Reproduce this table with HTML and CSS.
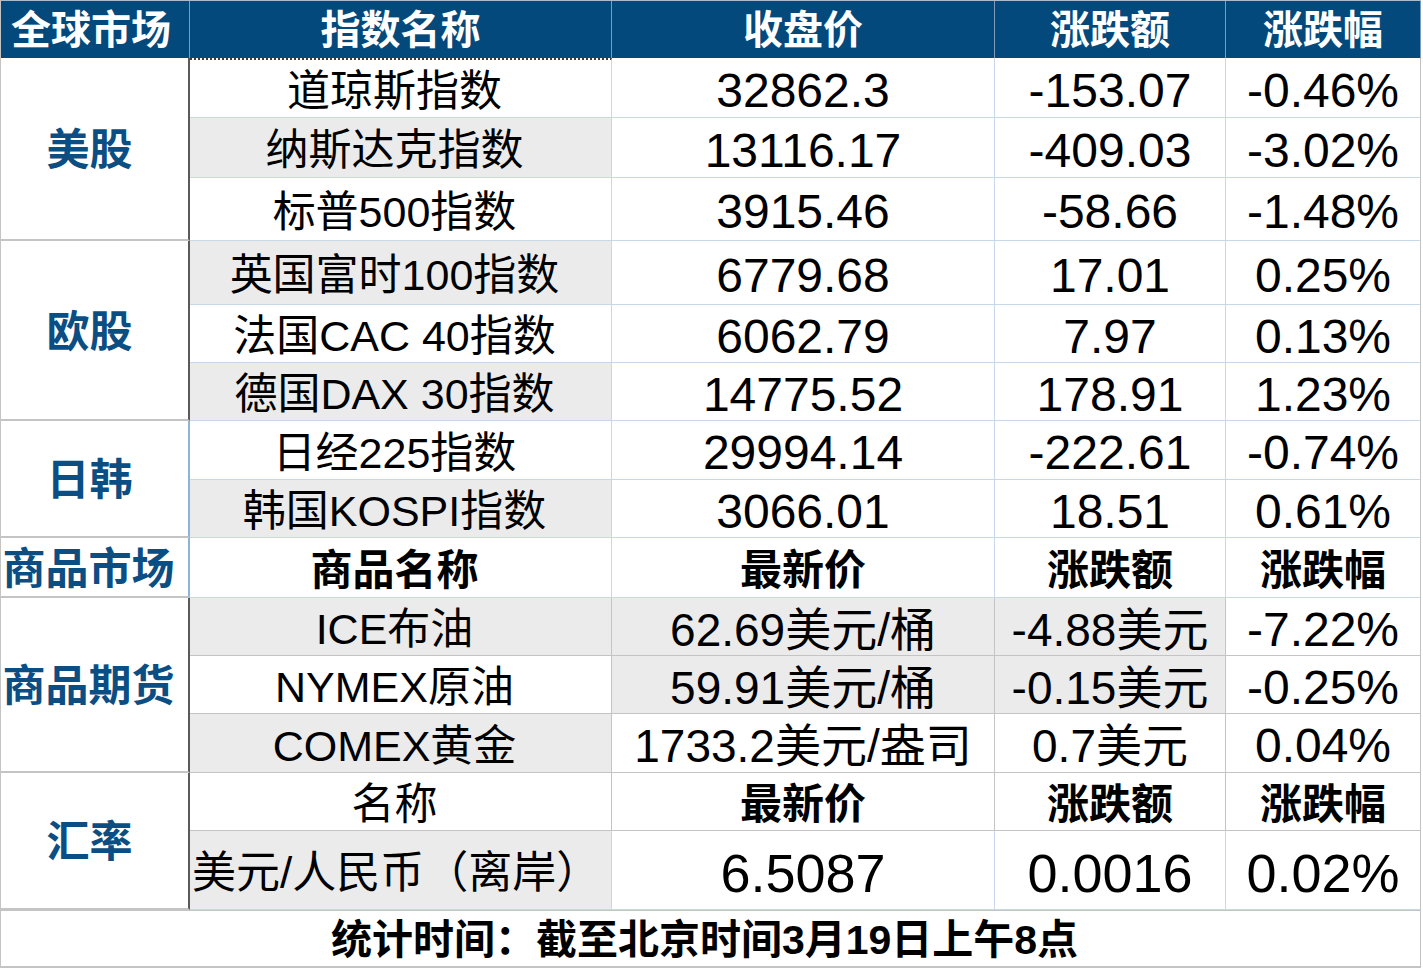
FILE: index.html
```html
<!DOCTYPE html>
<html lang="zh-CN">
<head>
<meta charset="utf-8">
<title>全球市场</title>
<link rel="stylesheet" href="styles.css">
</head>
<body>
<div class="sheet">
  <div class="c h hfirst">全球市场</div>
  <div class="c h">指数名称</div>
  <div class="c h">收盘价</div>
  <div class="c h">涨跌额</div>
  <div class="c h last">涨跌幅</div>

  <div class="c g span3">美股</div>
  <div class="c n dotted">道琼斯指数</div>
  <div class="c v">32862.3</div>
  <div class="c v">-153.07</div>
  <div class="c v last">-0.46%</div>
  <div class="c n gray">纳斯达克指数</div>
  <div class="c v">13116.17</div>
  <div class="c v">-409.03</div>
  <div class="c v last">-3.02%</div>
  <div class="c n">标普500指数</div>
  <div class="c v">3915.46</div>
  <div class="c v">-58.66</div>
  <div class="c v last">-1.48%</div>

  <div class="c g span3">欧股</div>
  <div class="c n gray">英国富时100指数</div>
  <div class="c v">6779.68</div>
  <div class="c v">17.01</div>
  <div class="c v last">0.25%</div>
  <div class="c n">法国CAC 40指数</div>
  <div class="c v">6062.79</div>
  <div class="c v">7.97</div>
  <div class="c v last">0.13%</div>
  <div class="c n gray">德国DAX 30指数</div>
  <div class="c v">14775.52</div>
  <div class="c v">178.91</div>
  <div class="c v last">1.23%</div>

  <div class="c g span2 blue-line">日韩</div>
  <div class="c n">日经225指数</div>
  <div class="c v">29994.14</div>
  <div class="c v">-222.61</div>
  <div class="c v last">-0.74%</div>
  <div class="c n gray">韩国KOSPI指数</div>
  <div class="c v">3066.01</div>
  <div class="c v">18.51</div>
  <div class="c v last">0.61%</div>

  <div class="c g blue-line wide">商品市场</div>
  <div class="c n sub">商品名称</div>
  <div class="c sub">最新价</div>
  <div class="c sub">涨跌额</div>
  <div class="c sub last">涨跌幅</div>

  <div class="c g span3 wide">商品期货</div>
  <div class="c n gray grid-gray">ICE布油</div>
  <div class="c m gray grid-gray">62.69美元/桶</div>
  <div class="c m gray grid-gray">-4.88美元</div>
  <div class="c v last grid-gray">-7.22%</div>
  <div class="c n grid-gray">NYMEX原油</div>
  <div class="c m gray grid-gray">59.91美元/桶</div>
  <div class="c m gray grid-gray">-0.15美元</div>
  <div class="c v last grid-gray">-0.25%</div>
  <div class="c n gray grid-gray">COMEX黄金</div>
  <div class="c m grid-gray">1733.2美元/盎司</div>
  <div class="c m grid-gray">0.7美元</div>
  <div class="c v last grid-gray">0.04%</div>

  <div class="c g span2">汇率</div>
  <div class="c n grid-gray">名称</div>
  <div class="c sub grid-gray">最新价</div>
  <div class="c sub grid-gray">涨跌额</div>
  <div class="c sub last grid-gray">涨跌幅</div>
  <div class="c n gray fxname">美元/人民币（离岸）</div>
  <div class="c fx">6.5087</div>
  <div class="c fx">0.0016</div>
  <div class="c fx last">0.02%</div>

  <div class="c foot">统计时间：截至北京时间3月19日上午8点</div>
</div>
</body>
</html>
```

FILE: styles.css
```css
* { box-sizing: border-box; }

html, body {
  margin: 0;
  padding: 0;
  background: #ffffff;
}

body {
  font-family: "Liberation Sans", "Noto Sans CJK SC", sans-serif;
  color: #000000;
}

.sheet {
  display: grid;
  grid-template-columns: 189px 422px 383px 231px 195px;
  grid-template-rows: 57px 60px 60px 63px 64px 58px 58px 59px 58px 60px 58px 58px 59px 58px 79px 58px;
  width: 1421px;
  border-left: 1px solid #c4c4c4;
  border-top: 1px solid #a9bccf;
}

.c {
  display: flex;
  align-items: center;
  justify-content: center;
  white-space: nowrap;
  overflow: hidden;
  line-height: 1;
  border-right: 1px solid #c7d8ea;
  border-bottom: 1px solid #c7d8ea;
  background: #ffffff;
}

.c.last { border-right: 1px solid #c2c2c2; }

.h {
  background: #03497c;
  color: #ffffff;
  font-weight: 700;
  font-size: 40px;
  border-right: 1px solid #7d9cbd;
  border-bottom: none;
}
.h.last { border-right: 1px solid #7d9cbd; }
.h.hfirst { padding-right: 8px; }

.g {
  color: #0b4e84;
  font-weight: 700;
  font-size: 43px;
  border-right: 2px solid #5a5a5a;
  border-bottom: 2px solid #c4c4c4;
  padding-top: 4px;
  padding-right: 10px;
}
.g.wide { padding-right: 12px; }
.g.blue-line { border-right-color: #8db3d6; }

.span3 { grid-row: span 3; }
.span2 { grid-row: span 2; }

.n {
  font-size: 43px;
  padding-top: 6px;
  padding-right: 12px;
}

.fxname {
  font-size: 44px;
  padding-right: 0;
  padding-left: 2px;
  justify-content: flex-start;
}

.dotted { border-top: 2px dotted #3c3c3c; }

.sub {
  font-weight: 700;
  font-size: 42px;
  padding-top: 6px;
}

.v {
  font-size: 48px;
  padding-top: 6px;
}

.m {
  font-size: 46px;
  padding-top: 6px;
}

.fx {
  font-size: 54px;
  padding-top: 6px;
}

.gray { background: #ebebeb; }

.grid-gray {
  border-right-color: #c4c4c4;
  border-bottom-color: #c4c4c4;
}

.foot {
  grid-column: 1 / -1;
  font-size: 41px;
  font-weight: 700;
  border-top: 1px solid #c4c4c4;
  border-bottom: 2px solid #c4c4c4;
  border-right: 1px solid #c2c2c2;
  padding-top: 4px;
  padding-right: 12px;
}
```
